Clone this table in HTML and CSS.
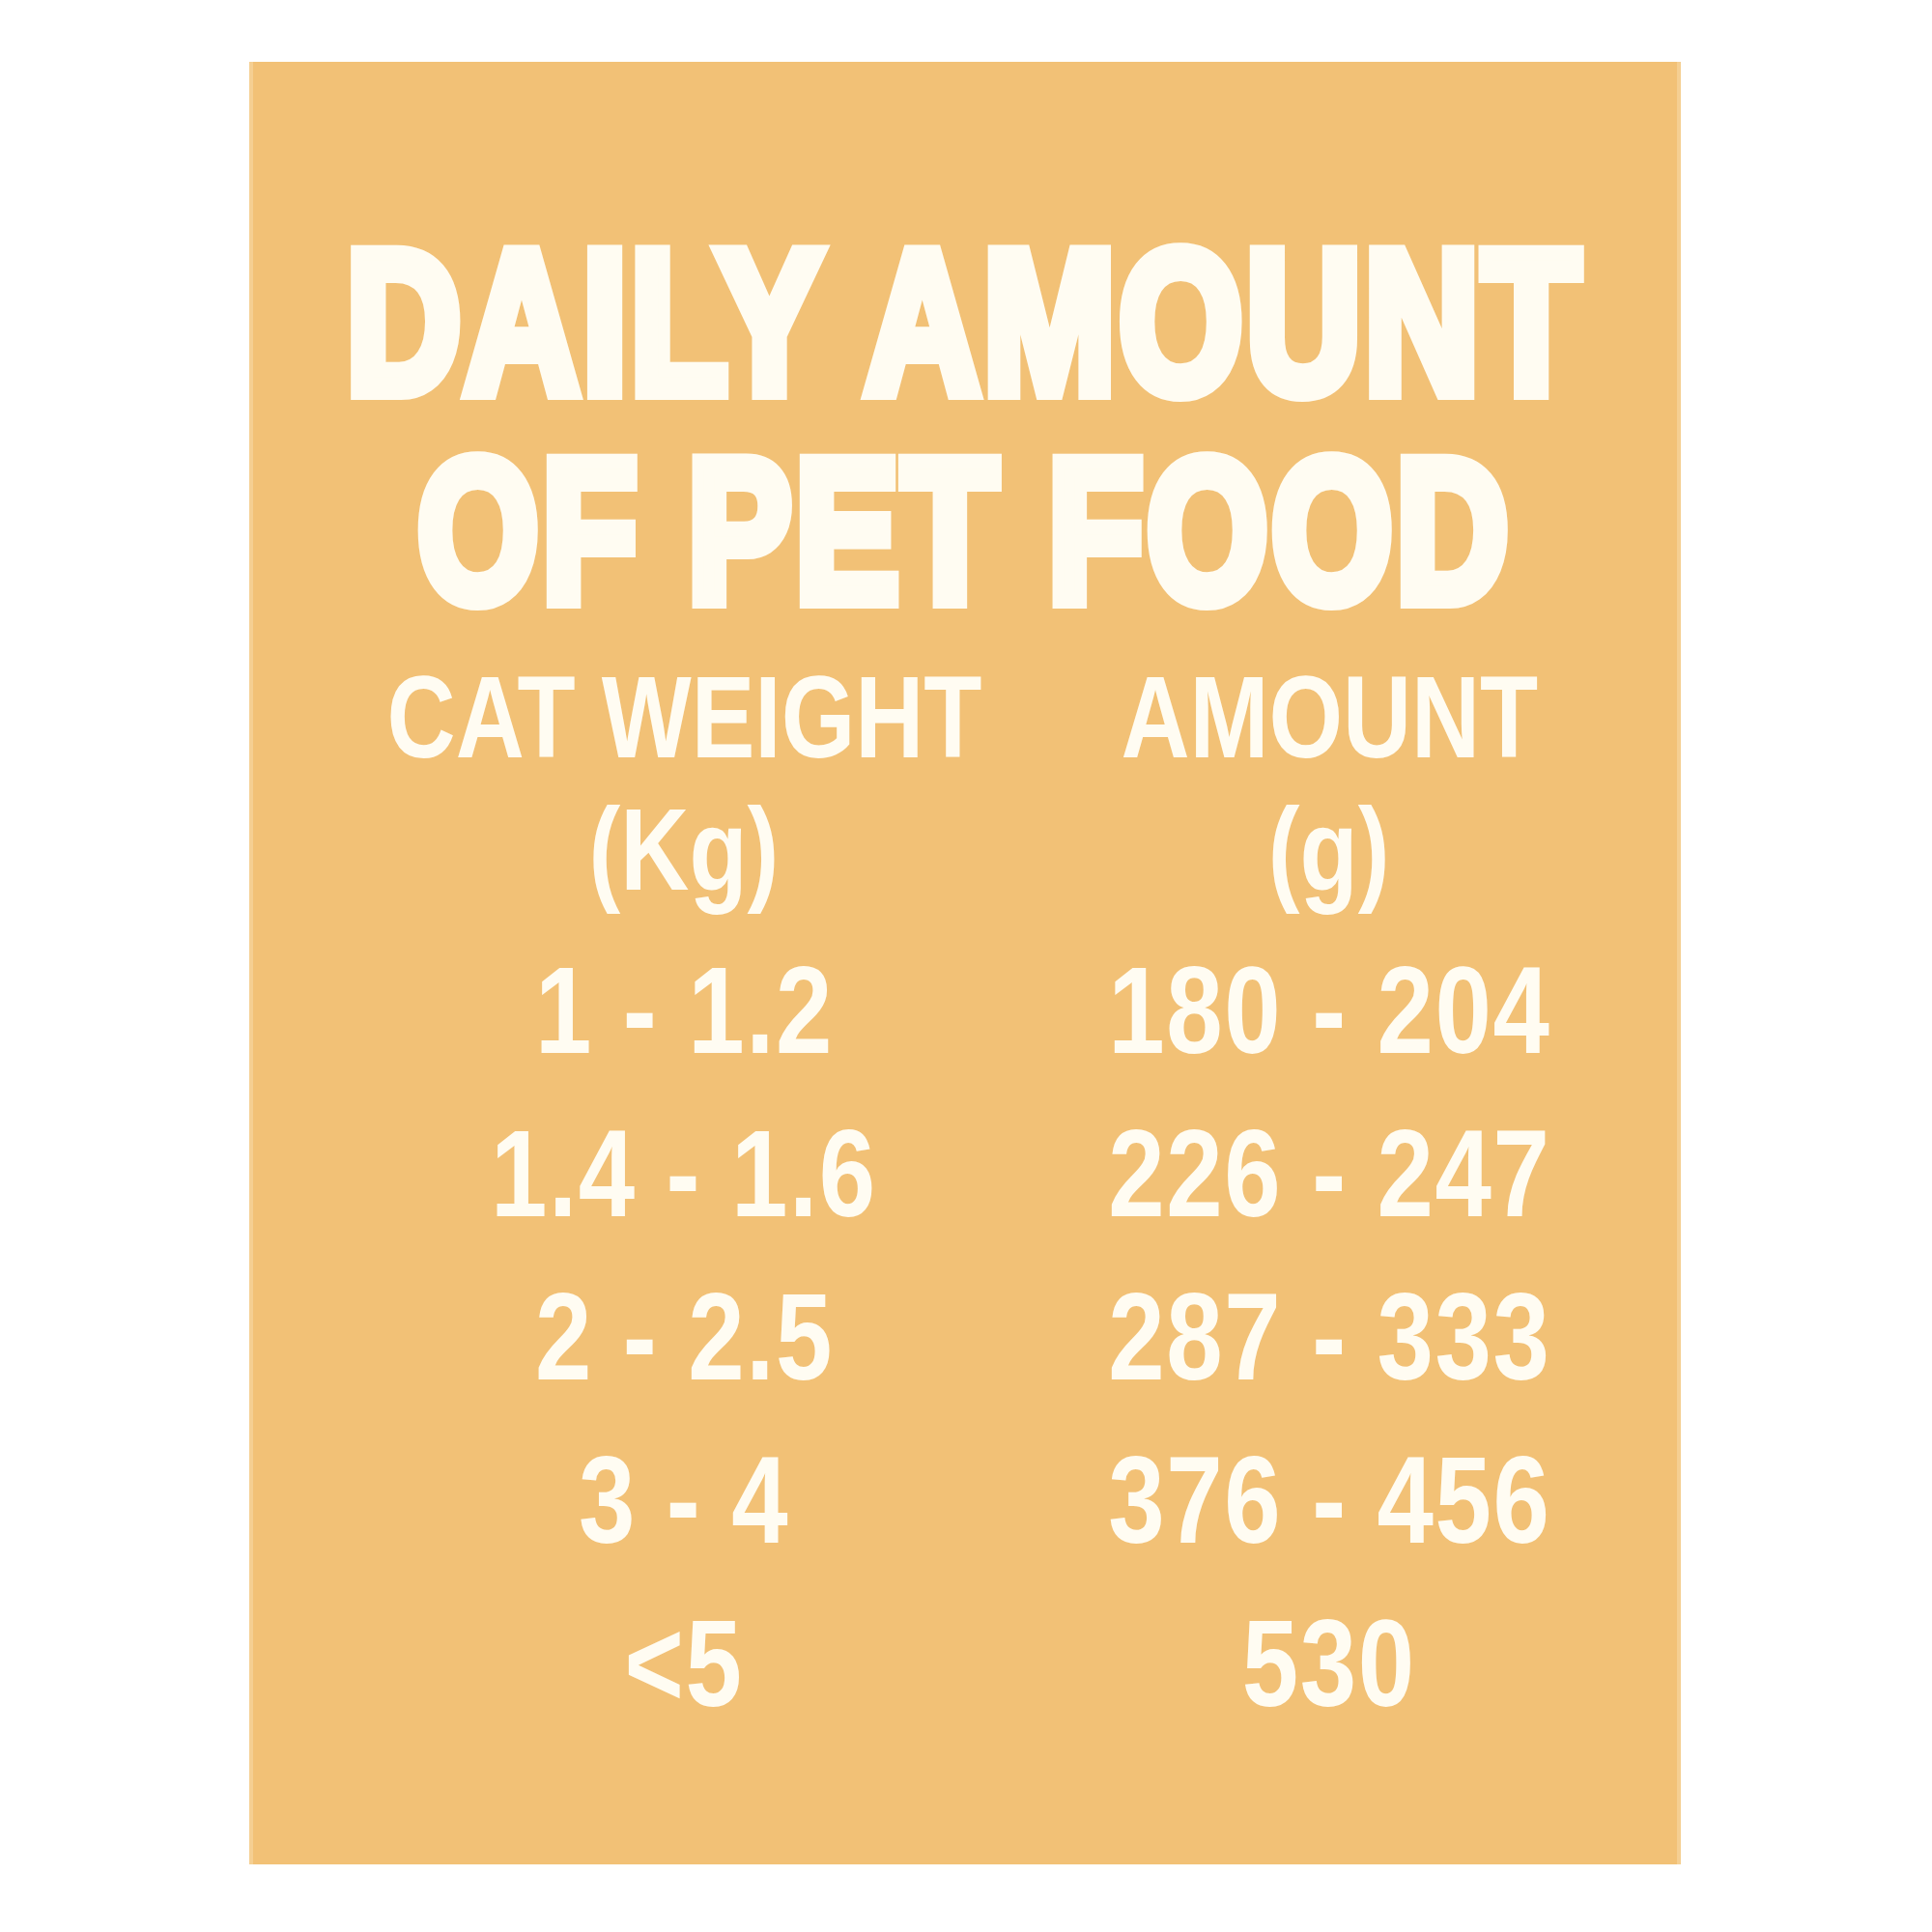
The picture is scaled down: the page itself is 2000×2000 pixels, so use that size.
FILE: index.html
```html
<!DOCTYPE html>
<html lang="en">
<head>
<meta charset="utf-8">
<title>Daily Amount of Pet Food</title>
<link rel="stylesheet" href="styles.css">
</head>
<body>
<div class="card">
  <h1 class="title">
    <span class="title-line title-line--first">DAILY AMOUNT</span>
    <span class="title-line title-line--second">OF PET FOOD</span>
  </h1>
  <div class="table">
    <div class="head"><span>CAT WEIGHT</span><span>(Kg)</span></div>
    <div class="head"><span>AMOUNT</span><span>(g)</span></div>
    <div class="cell"><span>1 - 1.2</span></div>
    <div class="cell"><span>180 - 204</span></div>
    <div class="cell"><span>1.4 - 1.6</span></div>
    <div class="cell"><span>226 - 247</span></div>
    <div class="cell"><span>2 - 2.5</span></div>
    <div class="cell"><span>287 - 333</span></div>
    <div class="cell"><span>3 - 4</span></div>
    <div class="cell"><span>376 - 456</span></div>
    <div class="cell"><span>&lt;5</span></div>
    <div class="cell"><span>530</span></div>
  </div>
</div>
</body>
</html>
```

FILE: styles.css
```css
html, body {
  margin: 0;
  padding: 0;
  background: #ffffff;
}

body {
  padding: 64px 0 0 258px;
}

.card {
  box-sizing: border-box;
  width: 1482px;
  height: 1866px;
  background: #f2c176;
  padding-top: 162px;
  color: #fffcf2;
  font-family: "Liberation Sans", Arial, sans-serif;
  font-weight: 700;
  overflow: hidden;
  border-left: 4px solid #f5cf92;
  border-right: 4px solid #f5cf92;
}

.title {
  margin: 0;
  display: flex;
  flex-direction: column;
  align-items: center;
  font-size: 209px;
  line-height: 216px;
  font-weight: 700;
  letter-spacing: 5px;
  -webkit-text-stroke: 16px #fffcf2;
}

.title-line {
  display: block;
  white-space: nowrap;
}

.title-line--first {
  transform: scaleX(0.785);
}

.title-line--second {
  transform: scaleX(0.77);
}

.table {
  margin-top: 16px;
  padding-left: 146px;
  display: grid;
  grid-template-columns: 600px 600px;
  column-gap: 68px;
}

.head {
  display: flex;
  flex-direction: column;
  align-items: center;
  font-size: 120px;
  line-height: 137px;
  margin-bottom: 13px;
}

.head span {
  display: block;
  white-space: nowrap;
  transform: scaleX(0.82);
}

.cell {
  display: flex;
  justify-content: center;
  font-size: 128px;
  line-height: 169px;
  letter-spacing: 2px;
}

.cell span {
  display: block;
  white-space: nowrap;
  transform: scaleX(0.82);
}
```
